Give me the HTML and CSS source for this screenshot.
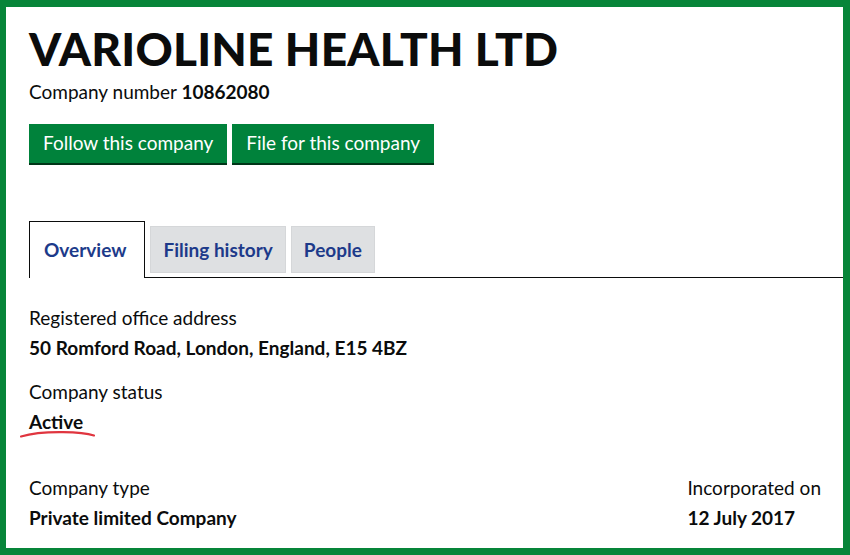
FILE: index.html
```html
<html>

<head>
    <title>VARIOLINE HEALTH LTD</title>
    <link rel="stylesheet" href="styles.css">
</head>

<body>
    <div class="frame">
        <h1 class="company-name">VARIOLINE HEALTH LTD</h1>
        <p class="company-number">Company number <strong>10862080</strong></p>

        <div class="actions">
            <a class="button" href="#">Follow this company</a>
            <a class="button" href="#">File for this company</a>
        </div>

        <ul class="tabs">
            <li class="tab active">Overview</li>
            <li class="tab">Filing history</li>
            <li class="tab">People</li>
        </ul>

        <dl class="field">
            <dt>Registered office address</dt>
            <dd>50 Romford Road, London, England, E15 4BZ</dd>
        </dl>

        <dl class="field">
            <dt>Company status</dt>
            <dd class="status">Active
                <svg class="scribble" width="78" height="10" viewBox="0 0 78 10">
                    <path d="M2 7.5C14 4 30 3 44 3.2C56 3.3 66 3.6 75 6.5" stroke="#e0353f" stroke-width="2.2" fill="none" stroke-linecap="round" />
                </svg>
            </dd>
        </dl>

        <div class="row">
            <dl class="field">
                <dt>Company type</dt>
                <dd>Private limited Company</dd>
            </dl>
            <dl class="field">
                <dt>Incorporated on</dt>
                <dd>12 July 2017</dd>
            </dl>
        </div>
    </div>
</body>

</html>
```

FILE: styles.css
```css
* {
    box-sizing: border-box;
    margin: 0;
    padding: 0;
}

body {
    background: #ffffff;
    font-family: Lato, "Liberation Sans", sans-serif;
    color: #0b0c0c;
}

.frame {
    width: 850px;
    height: 555px;
    border: 7px solid #078539;
    border-left-width: 6px;
    padding: 20px 0 0 23px;
    overflow: hidden;
}

.company-name {
    font-size: 46px;
    font-weight: 900;
    line-height: 44px;
    letter-spacing: 0.2px;
}

.company-number {
    font-size: 19px;
    margin-top: 10px;
    line-height: 22px;
}

.company-number strong {
    font-weight: 700;
}

/* 버튼 */
.actions {
    display: flex;
    gap: 5px;
    margin-top: 21px;
}

.button {
    display: block;
    background: #00823b;
    color: #ffffff;
    text-decoration: none;
    font-size: 19px;
    line-height: 20px;
    padding: 9px 14px 8px;
    box-shadow: 0 2px 0 #003618;
    height: 39px;
}

/* 탭 */
.tabs {
    list-style: none;
    display: flex;
    align-items: flex-start;
    gap: 5px;
    margin-top: 58px;
    border-bottom: 1px solid #0b0c0c;
    height: 57px;
}

.tab {
    background: #dee0e2;
    border: 1px solid #d5d7d9;
    color: #1d3a8a;
    font-size: 19px;
    font-weight: 700;
    line-height: 20px;
    margin-top: 5px;
    padding: 13px 12px 12px;
}

.active {
    background: #ffffff;
    border: 1px solid #0b0c0c;
    border-bottom: none;
    margin-top: 0;
    padding: 18px 18px 18px 14px;
    height: 57px;
}

/* 회사 정보 */
.field {
    margin-top: 22px;
    font-size: 19px;
    line-height: 22px;
}

.tabs + .field {
    margin-top: 29px;
}

.field dd {
    font-weight: 700;
    margin-top: 8px;
}

.status {
    position: relative;
}

.scribble {
    position: absolute;
    left: -10px;
    top: 18px;
}

.row {
    display: flex;
    justify-content: space-between;
    padding-right: 22px;
    margin-top: 22px;
}

.row .field {
    margin-top: 22px;
}
```
